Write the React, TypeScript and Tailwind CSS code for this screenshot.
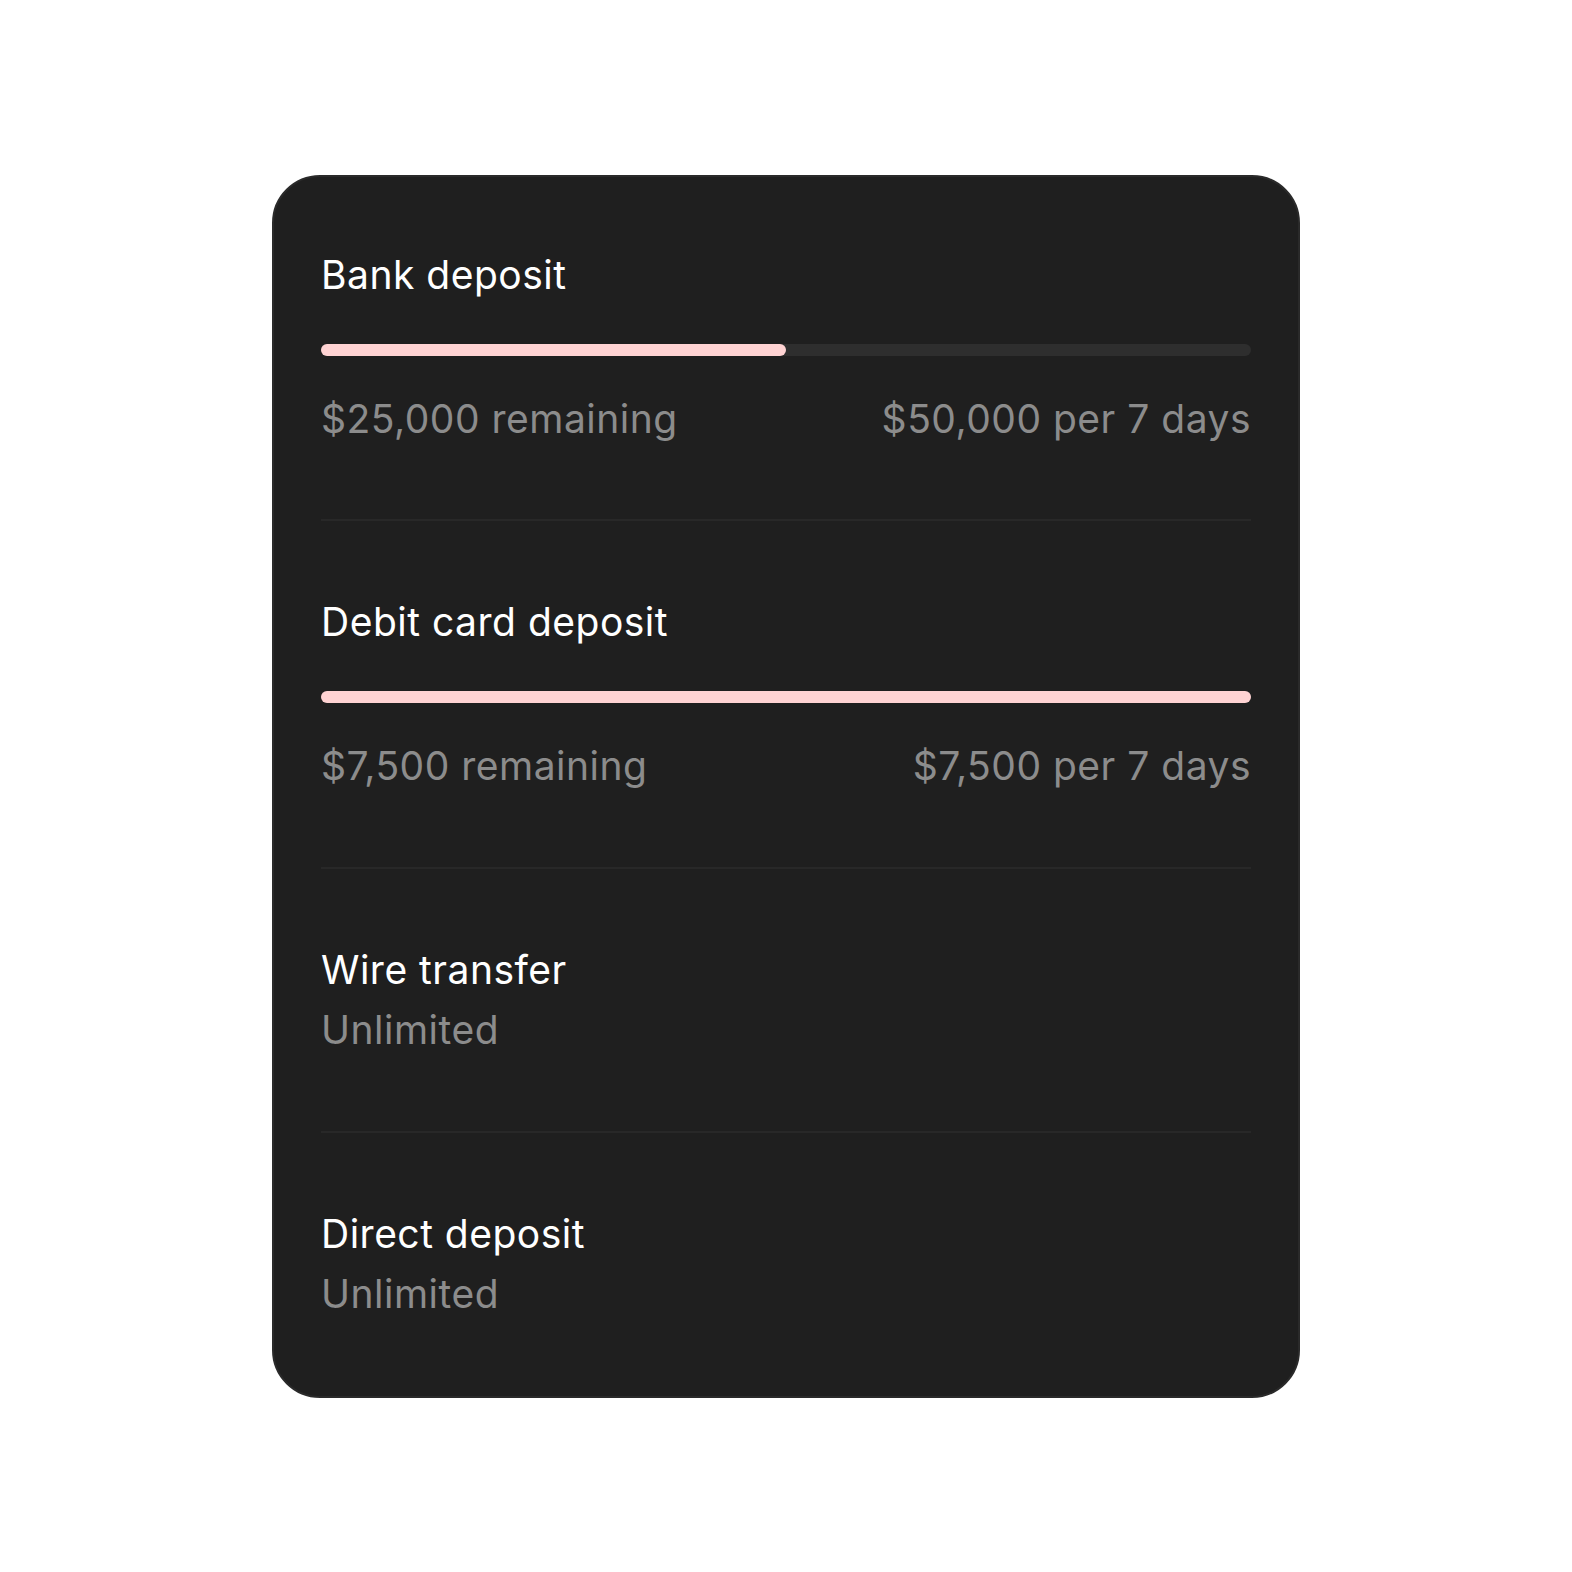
import React from "react";

type Limit = {
  title: string;
  progress?: number;
  left?: string;
  right?: string;
  sub?: string;
};

const limits: Limit[] = [
  { title: "Bank deposit", progress: 50, left: "$25,000 remaining", right: "$50,000 per 7 days" },
  { title: "Debit card deposit", progress: 100, left: "$7,500 remaining", right: "$7,500 per 7 days" },
  { title: "Wire transfer", sub: "Unlimited" },
  { title: "Direct deposit", sub: "Unlimited" },
];

export default function App() {
  return (
    <div
      className="flex h-[1572px] w-full items-center justify-center bg-white"
      style={{ fontFamily: "Inter, 'Noto Sans', sans-serif" }}
    >
      <div className="w-[1028px] rounded-[48px] border-2 border-[#2a2a2a] bg-[#1f1f1f] px-[47px]">
        {limits.map((l, i) => {
          const isFirst = i === 0;
          const isLast = i === limits.length - 1;
          return (
            <div
              key={l.title}
              className={
                isFirst
                  ? "border-b-2 border-[#282828] pt-[75px] pb-[77px]"
                  : isLast
                  ? "pt-[78px] pb-[79px]"
                  : "border-b-2 border-[#282828] py-[78px]"
              }
            >
              <div className="text-[39px] leading-[46px] font-normal tracking-[0.5px] text-white">
                {l.title}
              </div>
              {l.progress !== undefined ? (
                <>
                  <div className="mt-[46px] h-[12px] w-full rounded-full bg-[#2e2e2e]">
                    <div
                      className="h-full rounded-full bg-[#ffd3d3]"
                      style={{ width: `${l.progress}%` }}
                    />
                  </div>
                  <div className="mt-[40px] flex justify-between text-[39px] leading-[46px] tracking-[0.5px] text-[#8c8c8c]">
                    <span>{l.left}</span>
                    <span>{l.right}</span>
                  </div>
                </>
              ) : (
                <div className="mt-[14px] text-[39px] leading-[46px] tracking-[0.5px] text-[#8c8c8c]">
                  {l.sub}
                </div>
              )}
            </div>
          );
        })}
      </div>
    </div>
  );
}
